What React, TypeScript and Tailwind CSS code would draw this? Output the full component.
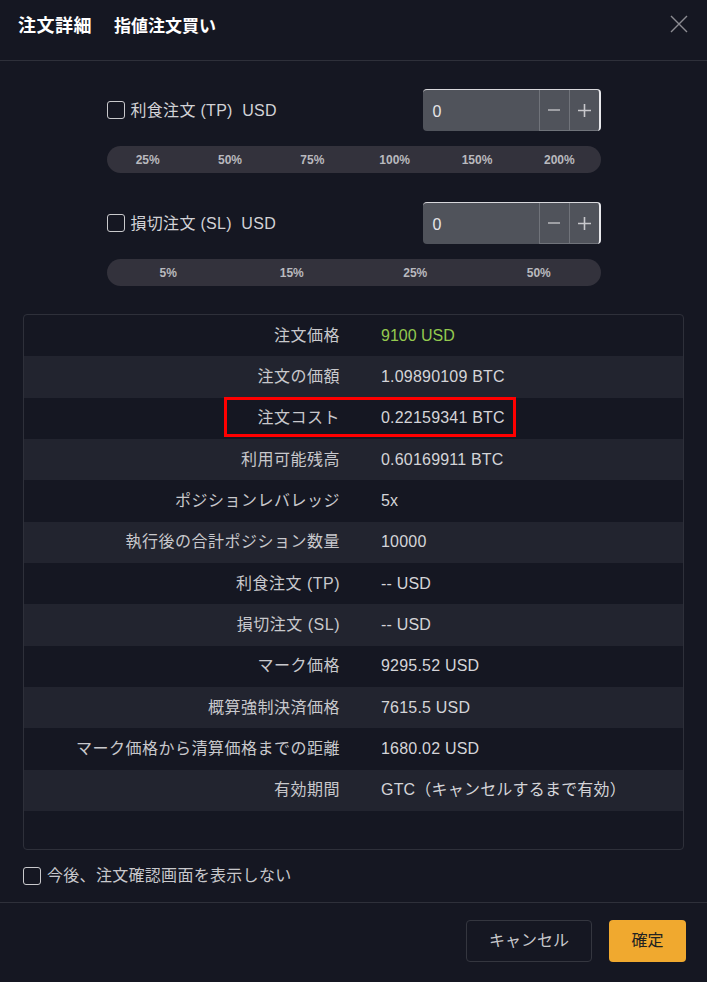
import React from "react";

const font = { fontFamily: '"Liberation Sans", "Noto Sans CJK JP", sans-serif' };

function Checkbox() {
  return <span className="inline-block w-[18px] h-[18px] border-[1.5px] border-[#c9c9cc] rounded-[3px] shrink-0" />;
}

function Stepper() {
  return (
    <div className="flex h-[42px] w-[178px] rounded-[4px] bg-[#50535b] border-t border-r-2 border-t-[#d8d8dc] border-r-[#e8e8ec] overflow-hidden">
      <div className="flex-1 flex items-center pl-[10px] pt-[2px] text-[16px] text-[#e6e6e8]">0</div>
      <div className="w-[30px] flex items-center justify-center border-l border-[#70737a] border-b text-[#c0c0c4] text-[20px]">
        <svg width="12" height="12" viewBox="0 0 12 12"><path d="M0 6h12" stroke="#b8b8bc" strokeWidth="1.6" /></svg>
      </div>
      <div className="w-[30px] flex items-center justify-center border-l border-[#70737a] border-b">
        <svg width="13" height="13" viewBox="0 0 13 13"><path d="M0 6.5h13M6.5 0v13" stroke="#c8c8cc" strokeWidth="1.6" /></svg>
      </div>
    </div>
  );
}

function PctBar({ items }: { items: string[] }) {
  return (
    <div className="flex h-[27px] rounded-full bg-[#33323c] items-center">
      {items.map((t) => (
        <div key={t} className="flex-1 text-center text-[12px] font-bold text-[#b9b9be]">{t}</div>
      ))}
    </div>
  );
}

const rows: [string, string][] = [
  ["注文価格", "9100 USD"],
  ["注文の価額", "1.09890109 BTC"],
  ["注文コスト", "0.22159341 BTC"],
  ["利用可能残高", "0.60169911 BTC"],
  ["ポジションレバレッジ", "5x"],
  ["執行後の合計ポジション数量", "10000"],
  ["利食注文 (TP)", "-- USD"],
  ["損切注文 (SL)", "-- USD"],
  ["マーク価格", "9295.52 USD"],
  ["概算強制決済価格", "7615.5 USD"],
  ["マーク価格から清算価格までの距離", "1680.02 USD"],
  ["有効期間", "GTC（キャンセルするまで有効）"],
];

export default function App() {
  return (
    <div className="w-[707px] h-[982px] bg-[#151722] flex flex-col" style={font}>
      <div className="h-[61px] shrink-0 border-b border-[#2e303a] flex items-start justify-between pl-[18px] pr-[19px] pt-[13px]">
        <div className="flex items-center gap-[22px] text-white font-bold">
          <span className="text-[18px] tracking-[0.5px]">注文詳細</span>
          <span className="text-[17px]">指値注文買い</span>
        </div>
        <svg width="18" height="18" viewBox="0 0 18 18" className="mt-[2px]">
          <path d="M1 1L17 17M17 1L1 17" stroke="#8c8c92" strokeWidth="1.4" />
        </svg>
      </div>

      <div className="w-[494px] mx-auto mt-[28px]">
        <div className="flex items-center justify-between">
          <div className="flex items-center gap-[6px] text-[16px] text-[#d2d2d6] tracking-[0.3px]">
            <Checkbox />
            <span className="pt-[2px]">利食注文 (TP)&nbsp;&nbsp;USD</span>
          </div>
          <Stepper />
        </div>
        <div className="mt-[15px]">
          <PctBar items={["25%", "50%", "75%", "100%", "150%", "200%"]} />
        </div>
        <div className="flex items-center justify-between mt-[29px]">
          <div className="flex items-center gap-[6px] text-[16px] text-[#d2d2d6] tracking-[0.3px]">
            <Checkbox />
            <span className="pt-[2px]">損切注文 (SL)&nbsp;&nbsp;USD</span>
          </div>
          <Stepper />
        </div>
        <div className="mt-[15px]">
          <PctBar items={["5%", "15%", "25%", "50%"]} />
        </div>
      </div>

      <div className="mx-[23px] mt-[28px] border border-[#2e303a] rounded-[4px] pb-[38px]">
        {rows.map(([k, v], i) => (
          <div
            key={k}
            className={`relative grid grid-cols-[316px_1fr] gap-x-[41px] items-center h-[41.33px] text-[16px] ${i % 2 === 1 ? "bg-[#22242f]" : ""}`}
          >
            <div className="text-right text-[#c8c8cc] tracking-[0.5px]">{k}</div>
            <div className={i === 0 ? "text-[#93c94f]" : "text-[#d4d4d8] tracking-[0.2px]"}>{v}</div>
            {i === 2 && (
              <div className="absolute left-[200px] top-[-1px] w-[292px] h-[40px] border-[3px] border-[#ff0000]" />
            )}
          </div>
        ))}
      </div>

      <div className="flex items-center gap-[6px] ml-[23px] mt-[14px] text-[16px] text-[#c8c8cc] tracking-[0.3px]">
        <Checkbox />
        <span>今後、注文確認画面を表示しない</span>
      </div>

      <div className="mt-[14px] border-t border-[#2e303a]" />

      <div className="flex justify-end gap-[17px] pr-[21px] mt-[17px]">
        <button className="h-[42px] w-[126px] rounded-[4px] border border-[#34363f] text-[16px] text-[#c8c8cc]">キャンセル</button>
        <button className="h-[42px] w-[77px] rounded-[4px] bg-[#f0a92f] text-[16px] text-[#222]">確定</button>
      </div>
    </div>
  );
}
